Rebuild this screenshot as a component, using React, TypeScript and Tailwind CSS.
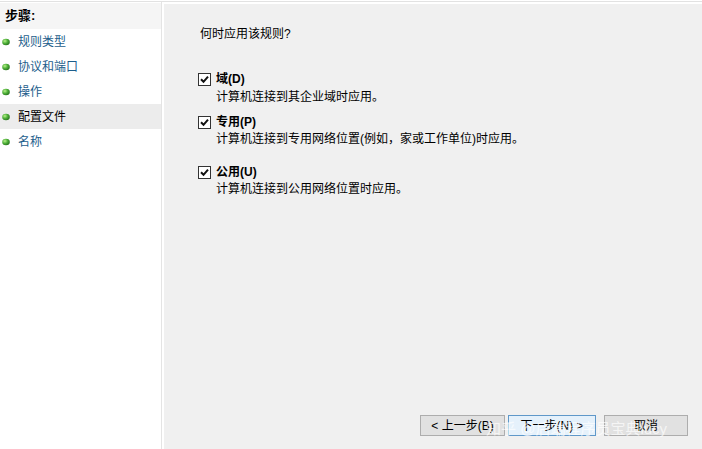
import React from "react";

const font = { fontFamily: '"Liberation Sans", "Noto Sans CJK SC", sans-serif' } as React.CSSProperties;

function Bullet() {
  return (
    <svg width="8" height="8" viewBox="0 0 8 8" className="shrink-0">
      <defs>
        <radialGradient id="g" cx="35%" cy="35%" r="65%">
          <stop offset="0%" stopColor="#b8f08a" />
          <stop offset="55%" stopColor="#4fb13a" />
          <stop offset="100%" stopColor="#2e7d22" />
        </radialGradient>
      </defs>
      <ellipse cx="4" cy="4" rx="3.8" ry="3.3" fill="url(#g)" />
    </svg>
  );
}

function Check() {
  return (
    <div className="w-[13px] h-[13px] border border-[#333] bg-white flex items-center justify-center shrink-0">
      <svg width="9" height="9" viewBox="0 0 9 9">
        <path d="M1 4.3 L3.5 6.8 L8 1.6" stroke="#111" strokeWidth="2" fill="none" />
      </svg>
    </div>
  );
}

const steps = ["规则类型", "协议和端口", "操作", "配置文件", "名称"];

export default function App() {
  return (
    <div className="w-[702px] h-[449px] bg-white relative overflow-hidden text-[12px] text-black" style={font}>
      <div className="h-[2px] border-b border-[#e2e2e2]" />
      <div className="flex h-[447px]">
        <div className="w-[161px] shrink-0 flex flex-col">
          <div className="h-[26px] mt-[1px] bg-[#f5f5f5] flex items-center pl-[5px] font-bold text-[13px]">步骤:</div>
          {steps.map((s, i) => (
            <div
              key={s}
              className={`h-[25px] flex items-center pl-[2px] gap-[8px] ${i === 3 ? "bg-[#ececec] text-black" : "text-[#1d5e8c]"}`}
            >
              <Bullet />
              <span>{s}</span>
            </div>
          ))}
        </div>
        <div className="w-[1px] bg-[#e4e4e4]" />
        <div className="w-[2px]" />
        <div className="flex-1 mt-[2px] bg-[#f0f0f0] flex flex-col pl-[34px] pr-[14px]">
          <div className="mt-[22px] leading-[16px] pl-[2px]">何时应用该规则?</div>
          <div className="mt-[29px] flex flex-col leading-[16px]">
            <div className="flex items-center gap-[5px]">
              <Check />
              <span className="font-bold">域(D)</span>
            </div>
            <div className="pl-[18px] mt-[2px]">计算机连接到其企业域时应用。</div>
            <div className="flex items-center gap-[5px] mt-[9px]">
              <Check />
              <span className="font-bold">专用(P)</span>
            </div>
            <div className="pl-[18px] mt-[1px]">计算机连接到专用网络位置(例如，家或工作单位)时应用。</div>
            <div className="flex items-center gap-[5px] mt-[17px]">
              <Check />
              <span className="font-bold">公用(U)</span>
            </div>
            <div className="pl-[18px] mt-[1px]">计算机连接到公用网络位置时应用。</div>
          </div>
          <div className="flex-1" />
          <div className="flex justify-end items-center mb-[13px]">
            <button className="w-[85px] h-[21px] border border-[#adadad] bg-[#e1e1e1] text-[12px] flex items-center justify-center">
              &lt; 上一步(B)
            </button>
            <button className="w-[88px] h-[21px] ml-[3px] border border-[#5f98c9] bg-[#e5f1fb] text-[12px] flex items-center justify-center">
              下一步(N) &gt;
            </button>
            <button className="w-[84px] h-[21px] ml-[8px] border border-[#adadad] bg-[#e1e1e1] text-[12px] flex items-center justify-center">
              取消
            </button>
          </div>
        </div>
      </div>
      <div className="absolute left-[486px] top-[418px] text-[15px] text-white/70 whitespace-nowrap pointer-events-none">
        知乎 @后端程序员宝典lucy
      </div>
    </div>
  );
}
